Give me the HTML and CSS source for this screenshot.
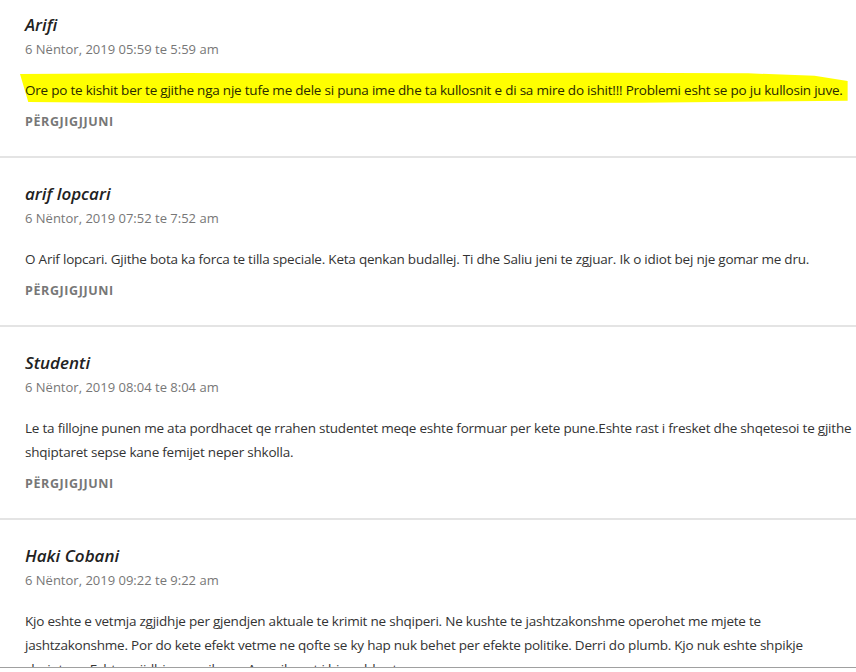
FILE: index.html
```html
<!DOCTYPE html>
<html lang="sq">
<head>
    <meta charset="UTF-8">
    <meta name="viewport" content="width=device-width, initial-scale=1.0">
    <title>Komente</title>
    <link rel="stylesheet" href="styles.css">
</head>
<body>
    <div class="frame">
        <ol class="comment-list">
            <li class="comment">
                <h4 class="author">Arifi</h4>
                <div class="meta">6 Nëntor, 2019 05:59 te 5:59 am</div>
                <p class="text"><span class="marker">Ore po te kishit ber te gjithe nga nje tufe me dele si puna ime dhe ta kullosnit e di sa mire do ishit!!! Problemi esht se po ju kullosin juve.</span></p>
                <a class="reply" href="#">Përgjigjjuni</a>
            </li>
            <li class="comment">
                <h4 class="author">arif lopcari</h4>
                <div class="meta">6 Nëntor, 2019 07:52 te 7:52 am</div>
                <p class="text">O Arif lopcari. Gjithe bota ka forca te tilla speciale. Keta qenkan budallej. Ti dhe Saliu jeni te zgjuar. Ik o idiot bej nje gomar me dru.</p>
                <a class="reply" href="#">Përgjigjjuni</a>
            </li>
            <li class="comment">
                <h4 class="author">Studenti</h4>
                <div class="meta">6 Nëntor, 2019 08:04 te 8:04 am</div>
                <p class="text">Le ta fillojne punen me ata pordhacet qe rrahen studentet meqe eshte formuar per kete pune.Eshte rast i fresket dhe shqetesoi te gjithe shqiptaret sepse kane femijet neper shkolla.</p>
                <a class="reply" href="#">Përgjigjjuni</a>
            </li>
            <li class="comment">
                <h4 class="author">Haki Cobani</h4>
                <div class="meta">6 Nëntor, 2019 09:22 te 9:22 am</div>
                <p class="text">Kjo eshte e vetmja zgjidhje per gjendjen aktuale te krimit ne shqiperi. Ne kushte te jashtzakonshme operohet me mjete te jashtzakonshme. Por do kete efekt vetme ne qofte se ky hap nuk behet per efekte politike. Derri do plumb. Kjo nuk eshte shpikje shqiptare. Eshte zgjidhje amerikane. Amerikanet i bien shkurt.</p>
                <a class="reply" href="#">Përgjigjjuni</a>
            </li>
        </ol>
    </div>
</body>
</html>
```

FILE: styles.css
```css
body {
    margin: 0;
    background: #fff;
    font-family: "Open Sans", "Liberation Sans", sans-serif;
}
.frame {
    height: 667px;
    overflow: hidden;
    border-bottom: 1px solid #a0a0a0;
}
.comment-list {
    list-style: none;
    margin: 0;
    padding: 0;
}
.comment {
    padding: 24px 0 22px 25px;
    border-bottom: 2px solid #e4e4e4;
}
.comment:first-child {
    padding-top: 13px;
}
.author {
    margin: 0;
    font-size: 17px;
    font-style: italic;
    font-weight: 600;
    line-height: 24px;
    color: #222;
}
.meta {
    margin-top: 2px;
    font-size: 13px;
    line-height: 20px;
    color: #777;
}
.text {
    margin: 19px 0 8px;
    font-size: 13.5px;
    line-height: 24px;
    color: #333;
    letter-spacing: -0.22px;
}
/* highlighted comment, drawn like a marker stroke */
.marker {
    display: inline-block;
    margin: -6px -5px -2px -5px;
    padding: 6px 5px 2px 5px;
    background: #ffff00;
    color: #2a2a00;
    clip-path: polygon(0 6%, 20% 3%, 45% 5%, 70% 2%, 88% 4%, 96% 12%, 100% 28%, 100% 90%, 75% 96%, 45% 98%, 15% 97%, 1% 94%);
}
.reply {
    display: block;
    font-size: 12.5px;
    font-weight: 700;
    line-height: 24px;
    letter-spacing: 0.6px;
    text-transform: uppercase;
    text-decoration: none;
    color: #777;
}
```
